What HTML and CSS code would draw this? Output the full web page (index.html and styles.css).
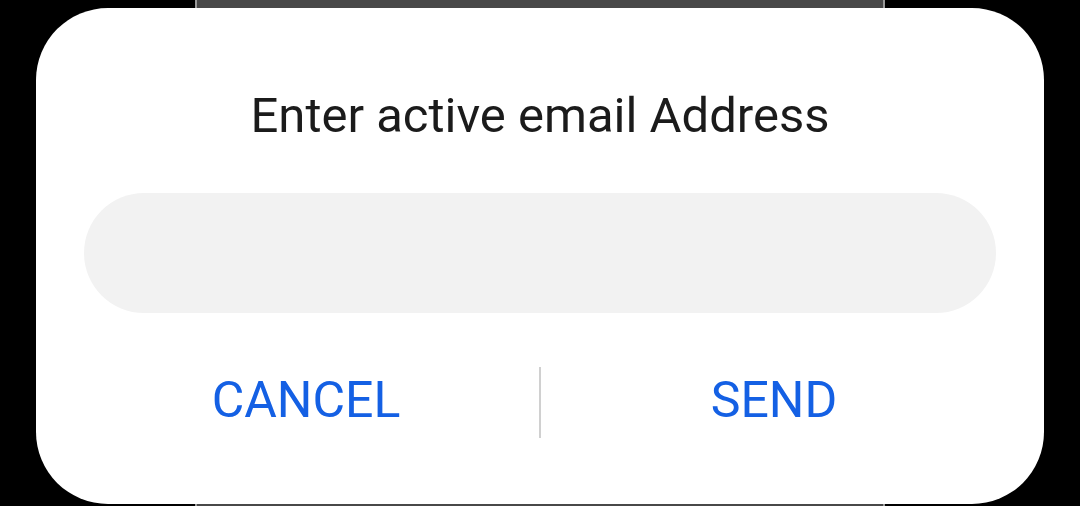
FILE: index.html
```html
<!DOCTYPE html>
<html lang="en">
<head>
    <meta charset="UTF-8">
    <meta name="viewport" content="width=device-width, initial-scale=1.0">
    <title>Enter active email Address</title>
    <link rel="stylesheet" href="styles.css">
</head>
<body>
<div class="backdrop top"><div class="backdrop-page"></div></div>
<div class="dialog">
    <h1 class="dialog-title">Enter active email Address</h1>
    <input class="email-input" type="email" aria-label="Email address">
    <div class="dialog-actions">
        <button class="action cancel">CANCEL</button>
        <span class="divider"></span>
        <button class="action send">SEND</button>
    </div>
</div>
<div class="backdrop bottom"><div class="backdrop-page"></div></div>
</body>
</html>
```

FILE: styles.css
```css
body {
    margin: 0;
    background: #000;
    font-family: Roboto, "Noto Sans", sans-serif;
    height: 506px;
    overflow: hidden;
}

.backdrop {
    height: 8px;
    padding-left: 195px;
}

.backdrop.bottom {
    height: 2px;
}

.backdrop-page {
    width: 686px;
    height: 100%;
    background: #484848;
    border-left: 2px solid #9a9a9a;
    border-right: 2px solid #9a9a9a;
}

.dialog {
    margin: 0 36px;
    height: 496px;
    box-sizing: border-box;
    background: #fff;
    border-radius: 72px;
    padding: 80px 48px 0;
    display: flex;
    flex-direction: column;
}

.dialog-title {
    margin: 0;
    text-align: center;
    font-size: 49px;
    line-height: 56px;
    font-weight: 400;
    color: #1b1b1b;
}

.email-input {
    margin-top: 49px;
    height: 120px;
    border: none;
    border-radius: 60px;
    background: #f2f2f2;
    outline: none;
    padding: 0 48px;
    font-size: 40px;
    font-family: inherit;
}

.dialog-actions {
    margin-top: 54px;
    display: flex;
    align-items: stretch;
    height: 71px;
}

.action {
    flex: 1;
    background: none;
    border: none;
    padding: 0 0 6px;
    font-family: inherit;
    font-size: 50px;
    line-height: 56px;
    color: #1460e4;
    cursor: pointer;
}

.action.cancel {
    padding-right: 11px;
}

.action.send {
    padding-left: 11px;
}

.divider {
    width: 2px;
    background: #d0d0d0;
}
```
